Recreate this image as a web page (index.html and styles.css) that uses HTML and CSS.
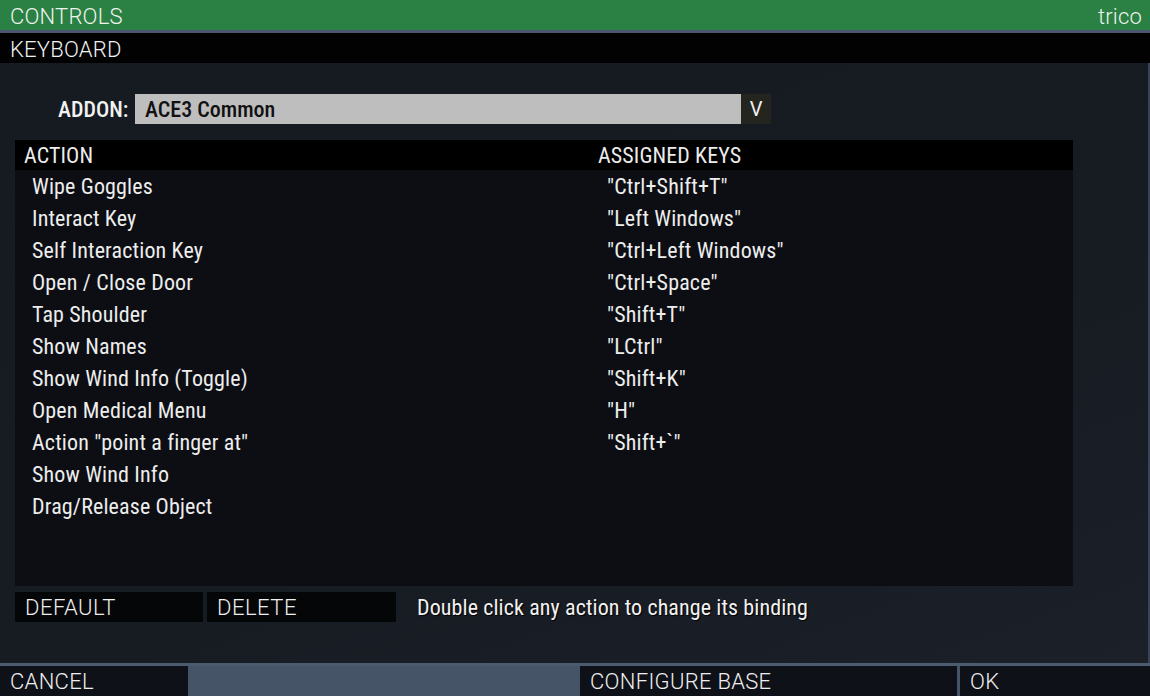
FILE: index.html
```html
<!DOCTYPE html>
<html>
<head>
<meta charset="utf-8">
<link rel="stylesheet" href="styles.css">
</head>
<body>
<div class="titlebar"><span>CONTROLS</span><span>trico</span></div>
<div class="subbar">KEYBOARD</div>
<div class="panel">
  <div class="addon-row">
    <span class="addon-label">ADDON:</span>
    <div class="select"><span>ACE3 Common</span></div>
    <div class="select-btn">V</div>
  </div>
  <div class="list">
    <div class="list-head"><span class="col-a">ACTION</span><span class="col-b">ASSIGNED KEYS</span></div>
    <div class="row"><span class="col-a">Wipe Goggles</span><span class="col-b">"Ctrl+Shift+T"</span></div>
    <div class="row"><span class="col-a">Interact Key</span><span class="col-b">"Left Windows"</span></div>
    <div class="row"><span class="col-a">Self Interaction Key</span><span class="col-b">"Ctrl+Left Windows"</span></div>
    <div class="row"><span class="col-a">Open / Close Door</span><span class="col-b">"Ctrl+Space"</span></div>
    <div class="row"><span class="col-a">Tap Shoulder</span><span class="col-b">"Shift+T"</span></div>
    <div class="row"><span class="col-a">Show Names</span><span class="col-b">"LCtrl"</span></div>
    <div class="row"><span class="col-a">Show Wind Info (Toggle)</span><span class="col-b">"Shift+K"</span></div>
    <div class="row"><span class="col-a">Open Medical Menu</span><span class="col-b">"H"</span></div>
    <div class="row"><span class="col-a">Action "point a finger at"</span><span class="col-b">"Shift+`"</span></div>
    <div class="row"><span class="col-a">Show Wind Info</span><span class="col-b"></span></div>
    <div class="row"><span class="col-a">Drag/Release Object</span><span class="col-b"></span></div>
  </div>
  <div class="actions">
    <div class="btn">DEFAULT</div>
    <div class="btn">DELETE</div>
    <div class="hint">Double click any action to change its binding</div>
  </div>
</div>
<div class="bottombar">
  <div class="bbtn cancel">CANCEL</div>
  <div class="spacer"></div>
  <div class="bbtn configure">CONFIGURE BASE</div>
  <div class="bbtn ok">OK</div>
</div>
</body>
</html>
```
FILE: styles.css
```css
html, body {
  margin: 0;
  padding: 0;
}
body {
  width: 1150px;
  height: 696px;
  overflow: hidden;
  background: #171b22;
  color: #ececec;
  font-family: "Roboto Condensed", "Roboto", "Liberation Sans", sans-serif;
}
.titlebar {
  height: 30px;
  box-sizing: border-box;
  background: #2b8043;
  border-bottom: 3px solid #4b5771;
  height: 33px;
  display: flex;
  justify-content: space-between;
  align-items: center;
  padding: 2px 8px 0 10px;
  font-family: "Roboto", "Liberation Sans", sans-serif;
  font-weight: 300;
  font-size: 22px;
  letter-spacing: 0.2px;
  color: #eef3ee;
}
.subbar {
  height: 30px;
  box-sizing: border-box;
  background: #020203;
  display: flex;
  align-items: center;
  padding: 2px 0 0 10px;
  font-family: "Roboto", "Liberation Sans", sans-serif;
  font-weight: 300;
  font-size: 22px;
  letter-spacing: 0.2px;
  color: #f0f0f0;
}
.panel {
  height: 600px;
  box-sizing: border-box;
  border-right: 2px solid #3a4356;
  background: linear-gradient(160deg, #161a21 0%, #171b22 60%, #1b2029 100%);
  display: flex;
  flex-direction: column;
}
.addon-row {
  margin-top: 31px;
  height: 30px;
  display: flex;
  align-items: stretch;
  padding-left: 58px;
}
.addon-label {
  display: flex;
  align-items: center;
  font-size: 22px;
  font-weight: 500;
  color: #f2f2f2;
  width: 77px;
}
.select {
  width: 606px;
  background: #bebebe;
  color: #111;
  display: flex;
  align-items: center;
  padding-left: 10px;
  box-sizing: border-box;
  font-size: 22px;
  font-weight: 500;
}
.select-btn {
  width: 30px;
  background: #25251f;
  color: #f0f0f0;
  display: flex;
  align-items: center;
  justify-content: center;
  font-family: "Roboto", sans-serif;
  font-weight: 400;
  font-size: 20px;
}
.list {
  margin: 16px 0 0 15px;
  width: 1058px;
  height: 446px;
  background: #0c0e13;
}
.list-head {
  height: 30px;
  background: #000;
  display: flex;
  align-items: center;
  font-size: 22px;
  font-weight: 400;
  letter-spacing: 0.1px;
}
.list-head .col-a {
  width: 574px;
  padding-left: 9px;
}
.row {
  height: 32px;
  display: flex;
  align-items: center;
  font-size: 22px;
  font-weight: 400;
  letter-spacing: 0.15px;
  color: #ededed;
}
.row .col-a {
  width: 574px;
  padding-left: 17px;
}
.row .col-b {
  padding-left: 1px;
}
.actions {
  margin-top: 6px;
  height: 30px;
  display: flex;
  padding-left: 15px;
  gap: 4px;
}
.btn {
  width: 188px;
  box-sizing: border-box;
  background: #050608;
  display: flex;
  align-items: center;
  padding-left: 10px;
  font-family: "Roboto", sans-serif;
  font-weight: 300;
  font-size: 22px;
  letter-spacing: 0.5px;
  color: #eee;
}
.btn + .btn {
  width: 189px;
}
.hint {
  margin-left: 17px;
  display: flex;
  align-items: center;
  font-size: 22px;
  font-weight: 400;
  letter-spacing: 0.1px;
  color: #f2f2f2;
  text-shadow: 1px 1px 1px #000;
}
.bottombar {
  height: 33px;
  box-sizing: border-box;
  border-top: 3px solid #4d5b70;
  background: #465468;
  display: flex;
}
.bbtn {
  background: #0e1117;
  display: flex;
  align-items: center;
  padding-left: 10px;
  box-sizing: border-box;
  font-family: "Roboto", sans-serif;
  font-weight: 300;
  font-size: 22px;
  letter-spacing: 0.3px;
  color: #eee;
}
.cancel { width: 188px; }
.spacer { width: 392px; }
.configure { width: 377px; }
.ok { width: 190px; margin-left: 3px; }
```
